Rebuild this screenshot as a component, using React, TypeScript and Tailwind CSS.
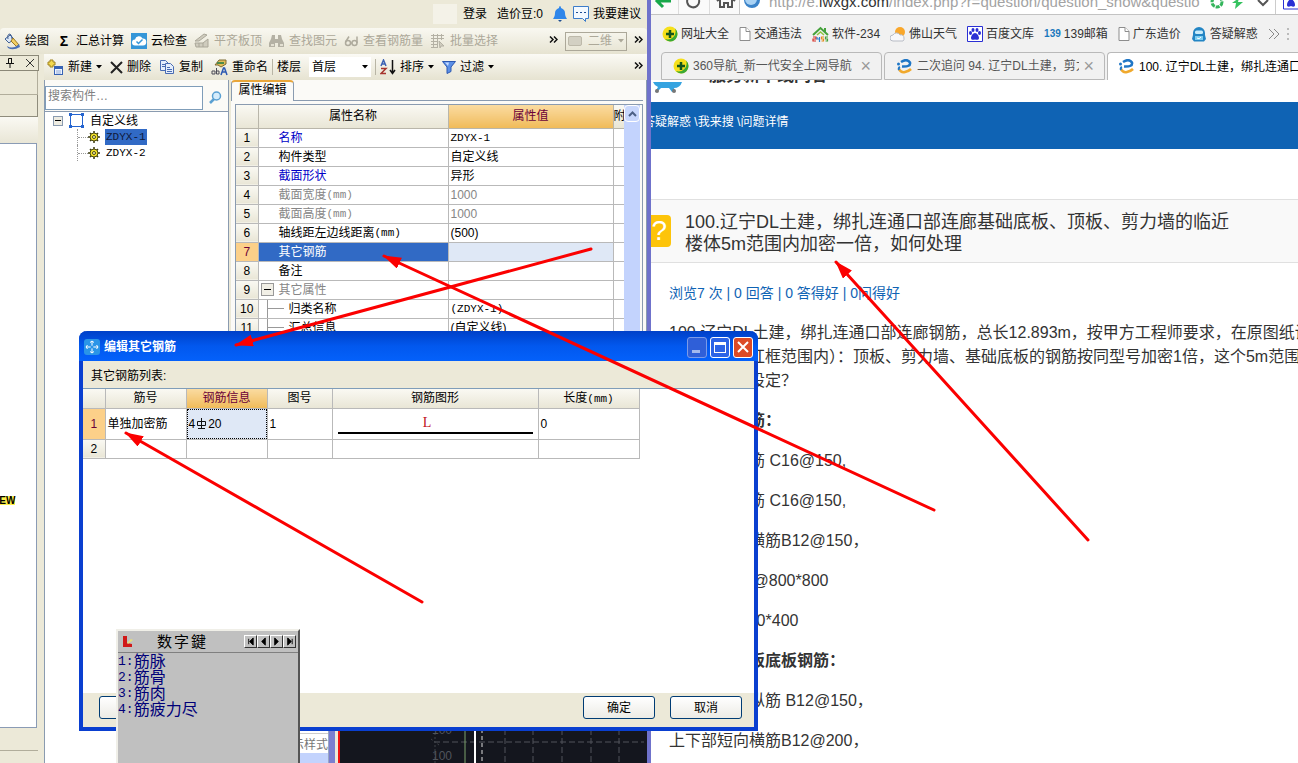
import React from 'react'
import clsx from 'clsx'

interface IconProps {
  className?: string
}
interface PropertyRow {
  name: string
  unit?: string
  value: string
  mono?: boolean
  tone?: 'blue' | 'gray'
  selected?: boolean
  group?: boolean
  child?: boolean
}

const uiFont = "font-['Liberation_Sans','Noto_Sans_CJK_SC',sans-serif]"
const monoFont = "font-['Liberation_Mono','Noto_Sans_CJK_SC',monospace] text-[11px]"
const headFill = 'bg-linear-to-b from-[#faf9f3] to-[#e9e6d6]'
const hotFill = 'bg-linear-to-b from-[#fadba0] to-[#f0bb58]'

const properties: PropertyRow[] = [
  { name: '名称', value: 'ZDYX-1', mono: true, tone: 'blue' },
  { name: '构件类型', value: '自定义线' },
  { name: '截面形状', value: '异形', tone: 'blue' },
  { name: '截面宽度', unit: '(mm)', value: '1000', tone: 'gray' },
  { name: '截面高度', unit: '(mm)', value: '1000', tone: 'gray' },
  { name: '轴线距左边线距离', unit: '(mm)', value: '(500)' },
  { name: '其它钢筋', value: '', selected: true },
  { name: '备注', value: '' },
  { name: '其它属性', value: '', tone: 'gray', group: true },
  { name: '归类名称', value: '(ZDYX-1)', mono: true, child: true },
  { name: '汇总信息', value: '(自定义线)', child: true },
]

const answers: { text: string; bold?: boolean }[] = [
  { text: '一、顶板钢筋：', bold: true },
  { text: '上部长向纵筋 C16@150,' },
  { text: '下部长向纵筋 C16@150,' },
  { text: '上下部短向横筋B12@150，' },
  { text: '拉结钢筋A6@800*800' },
  { text: '暗梁 b*h=400*400' },
  { text: '二、通廊筏板底板钢筋：', bold: true },
  { text: '上下部长向纵筋 B12@150，' },
  { text: '上下部短向横筋B12@200，' },
]

const arrows = [
  [591, 249, 236, 345],
  [934, 510, 384, 256],
  [1088, 540, 836, 262],
  [422, 602, 126, 433],
]

function BucketIcon(): React.JSX.Element {
  return (
    <svg width="17" height="17" viewBox="0 0 17 17">
      <path d="M1 6 L6 2 L10 6 L5 10 Z" fill="#dbe6f5" stroke="#3f5f93" />
      <path d="M4 6 Q3 1 6 1 Q8 2 8 6" fill="none" stroke="#3f5f93" />
      <path d="M9 5 L15 12 L13 14 L7 8 Z" fill="#f2cf63" stroke="#9a7620" />
      <path d="M3 13 Q9 17 15 11 L16 14 Q9 18 4 15Z" fill="#4a6fb4" />
    </svg>
  )
}
function CloudIcon(): React.JSX.Element {
  return (
    <svg width="16" height="16" viewBox="0 0 16 16">
      <rect width="16" height="16" fill="#3596d8" />
      <path d="M4 12.500a3 3 0 0 1 0-6 4 4 0 0 1 7.500-1A3.500 3.500 0 0 1 12 12.500Z" fill="#fff" />
      <path d="m5.500 8.500 2 2 4-4" fill="none" stroke="#3596d8" strokeWidth="1.500" />
    </svg>
  )
}
function SlabIcon(): React.JSX.Element {
  return (
    <svg width="16" height="16" viewBox="0 0 16 16" fill="#cfccbe" stroke="#aaa799">
      <path d="M1 8 L10 1 L13 2 L5 8 Z" />
      <path d="M1 10 H9 L14 6 V14 H2Z" />
      <path d="M5 10V14M9 10V14" />
    </svg>
  )
}
function BinocularsIcon(): React.JSX.Element {
  return (
    <svg width="16" height="16" viewBox="0 0 16 16" fill="#b4b1a4">
      <path d="M3 2h3v4h3V2h3l1 4 2 4v4H9v-4H6v4H0v-4l2-4Z" />
      <path d="M2 11h3v2H2zM11 11h3v2h-3z" fill="#e3e0d2" />
    </svg>
  )
}
function GlassesIcon(): React.JSX.Element {
  return (
    <svg width="15" height="12" viewBox="0 0 15 12" fill="none" stroke="#aeab9d" strokeWidth="1.500">
      <circle cx="4" cy="8" r="2.500" />
      <circle cx="10.500" cy="8" r="2.500" />
      <path d="M1.500 7 5 1.500M13 8V1.500M6 8h2" />
    </svg>
  )
}
function BatchIcon(): React.JSX.Element {
  return (
    <svg width="16" height="16" viewBox="0 0 16 16" fill="none" stroke="#b4b1a4">
      <path d="M1 2.500h13M1 5.500h13M1 8.500h7M1 11.500h7M1 14.500h7M3.500 1v14M7.500 1v14M11.500 1v6" />
      <path d="m9 8 5 5h-3l-1 2Z" fill="#d0cdbf" />
    </svg>
  )
}
function NewIcon(): React.JSX.Element {
  return (
    <svg width="17" height="17" viewBox="0 0 17 17">
      <path d="M3 1h3v2h2v3H6v2H3V6H1V3h2Z" fill="#f4d94e" stroke="#a08320" />
      <rect x="7.500" y="7.500" width="8" height="8" fill="#eef4ff" stroke="#3763b5" />
      <path d="M7 9h9" stroke="#3763b5" strokeWidth="2" />
      <path d="M9 12h5M9 14h5" stroke="#8fa9d8" />
    </svg>
  )
}
function CopyIcon(): React.JSX.Element {
  return (
    <svg width="16" height="16" viewBox="0 0 16 16" fill="#e5eefc" stroke="#4a6cb3">
      <path d="M1.500 1.500h5l3 3v7h-8Z" />
      <path d="M6.500 4.500h5l3 3v7h-8Z" />
      <path d="M8 8.500h3M8 10.500h5M8 12.500h5M3 5.500h3M3 7.500h3" />
    </svg>
  )
}
function RenameIcon(): React.JSX.Element {
  return (
    <svg width="17" height="17" viewBox="0 0 17 17">
      <path d="M4 6 8 1h7v4l-5 3-3-2Z" fill="#e2bd57" stroke="#7c6a35" />
      <path d="M6 4h7" stroke="#4e8a4b" strokeWidth="2" />
      <path d="M1 15v-3h3v3H1m4.500-6v6H8v-3H5" fill="none" stroke="#4b4b57" />
      <path d="m10 16 2.500-7h1l2.500 7M11 13h4" fill="none" stroke="#2d59b2" strokeWidth="1.500" />
    </svg>
  )
}
function SortIcon(): React.JSX.Element {
  return (
    <svg width="16" height="16" viewBox="0 0 16 16" fill="none" strokeWidth="1.500">
      <path d="m1 7 2.500-6L6 7M2 5h3" stroke="#3c62b4" />
      <path d="M1 9.500h5l-5 5h5" stroke="#a6342e" />
      <path d="M12.500 1v13M10 11l2.500 3.500L15 11" stroke="#111" />
    </svg>
  )
}
function FunnelIcon(): React.JSX.Element {
  return (
    <svg width="14" height="13" viewBox="0 0 14 13">
      <path d="M.5.5h13L9 6v4.500L5 12.500V6Z" fill="#5b8fe6" stroke="#2c58b0" />
      <path d="M3 1.500h4L6 5Z" fill="#c6dcff" />
    </svg>
  )
}
function BellIcon(): React.JSX.Element {
  return (
    <svg width="14" height="16" viewBox="0 0 14 16" fill="#2f86ea">
      <path d="M7 0a2 2 0 0 1 1 2c3 1 4 3 4 5 0 3 1 4 2 6H0C1 11 2 10 2 7c0-2 1-4 4-5a2 2 0 0 1 1-2Z" />
      <path d="M5 14h4l-2 2Z" fill="#1d4e92" />
    </svg>
  )
}
function SpeechIcon(): React.JSX.Element {
  return (
    <svg width="16" height="16" viewBox="0 0 16 16" fill="#f3f9ff" stroke="#3c7cc9">
      <path d="M.5 .5h15v12h-3v3l-3-3h-9Z" />
      <path d="M3 6.500h2M7 6.500h2M11 6.500h2" stroke="#1c4c94" />
    </svg>
  )
}
function GearIcon(): React.JSX.Element {
  return (
    <svg width="12" height="12" viewBox="0 0 12 12">
      <path d="M6 0v12M0 6h12M2 2l8 8M10 2l-8 8" stroke="#3a3a12" strokeWidth="1.500" />
      <circle cx="6" cy="6" r="4" fill="#f3e227" stroke="#4d4a10" />
      <circle cx="6" cy="6" r="1.500" fill="#fffcc0" stroke="#4d4a10" />
    </svg>
  )
}
function SquareIcon(): React.JSX.Element {
  return (
    <svg width="15" height="15" viewBox="0 0 15 15" fill="#2464d0">
      <path d="M1.500 1.500h12v12h-12Z" fill="none" stroke="#2464d0" />
      <path d="M0 0h3v3H0zM12 0h3v3h-3zM0 12h3v3H0zM12 12h3v3h-3z" />
    </svg>
  )
}
function PlusBallIcon(): React.JSX.Element {
  return (
    <svg width="16" height="16" viewBox="0 0 16 16">
      <circle cx="8" cy="8" r="7.500" fill="#f6e01b" />
      <path d="M3 13A8 8 0 0 0 13 2.500 7.500 7.500 0 0 1 8 15.500 8 8 0 0 1 3 13Z" fill="#3aa935" />
      <path d="M8 4v8M4 8h8" stroke="#14551c" strokeWidth="2.500" />
    </svg>
  )
}
function PageIcon(): React.JSX.Element {
  return (
    <svg width="12" height="14" viewBox="0 0 12 14" fill="#fff" stroke="#8d8d8d">
      <path d="M1 .5h6l4 4v9H1Z" />
      <path d="M7 .5v4h4" />
    </svg>
  )
}
function HouseIcon(): React.JSX.Element {
  return (
    <svg width="17" height="16" viewBox="0 0 17 16" fill="none" strokeWidth="2">
      <path d="m1 9 7.500-7L16 9M13 2v4" stroke="#45a23b" />
      <path d="M5 9l3.500-3L12 9" stroke="#8cc63f" strokeWidth="1.500" />
      <path d="M1 11h3v2H1v2h3" stroke="#d8322a" strokeWidth="1.200" />
      <path d="M5 11v2h3M7.500 11v5" stroke="#2b7fd0" strokeWidth="1.200" />
      <path d="M12 11H9.500v2h2v2h-2" stroke="#e68a1d" strokeWidth="1.200" />
      <path d="M16 11h-2.500v2h2v2h-2" stroke="#45a23b" strokeWidth="1.200" />
    </svg>
  )
}
function WeatherIcon(): React.JSX.Element {
  return (
    <svg width="16" height="16" viewBox="0 0 16 16">
      <circle cx="10" cy="6" r="5" fill="#f9a72b" />
      <path d="M3 15a3 3 0 0 1 0-6 4 4 0 0 1 7 0 3 3 0 0 1 4 3 3 3 0 0 1-1 3Z" fill="#f7f7fa" stroke="#b9bdc6" />
    </svg>
  )
}
function PawIcon(): React.JSX.Element {
  return (
    <svg width="16" height="16" viewBox="0 0 16 16" fill="#2a2fd4">
      <path d="M.5.5h15v15H.5Z" fill="#fff" stroke="#2a2fd4" />
      <ellipse cx="3.500" cy="7" rx="1.500" ry="2" />
      <ellipse cx="6" cy="4" rx="1.500" ry="2" />
      <ellipse cx="10" cy="4" rx="1.500" ry="2" />
      <ellipse cx="12.500" cy="7" rx="1.500" ry="2" />
      <path d="M8 7c2 0 4 3 4 5s-2 2-4 1.500C6 14 4 14 4 12s2-5 4-5Z" />
    </svg>
  )
}
function RobotIcon(): React.JSX.Element {
  return (
    <svg width="16" height="16" viewBox="0 0 16 16">
      <path d="M2 7a6 6 0 0 1 12 0v2l1 4-2 2.500H3L1 13l1-4Z" fill="#2385c4" />
      <rect x="4" y="4.500" width="8" height="3.500" rx="1.500" fill="#c8ecfb" />
      <path d="M4 10h8v4H4Z" fill="#7ccdf0" />
      <path d="M6 12q2 2 4-1" stroke="#fff" fill="none" />
    </svg>
  )
}
function SwirlIcon(): React.JSX.Element {
  return (
    <svg width="17" height="15" viewBox="0 0 17 15" fill="none">
      <path d="M5 3Q11-1 14 3.500 15 8 6 7.500" stroke="#1f76c6" strokeWidth="2.500" />
      <path d="M3 10Q5 14 9 13 13 12 15 10" stroke="#f0a92d" strokeWidth="2.500" />
      <path d="M4 8Q2 9 3 11" stroke="#1f76c6" strokeWidth="2" />
      <circle cx="2.500" cy="5" r="1.500" fill="#1f76c6" />
    </svg>
  )
}
function Caret({ className }: IconProps): React.JSX.Element {
  return (
    <svg width="6" height="4" viewBox="0 0 6 4" className={className}>
      <path d="M0 0h6L3 3.500Z" fill="currentColor" />
    </svg>
  )
}
function More(): React.JSX.Element {
  return (
    <button aria-label="more" className="shrink-0 self-start pt-2">
      <svg width="9" height="7" viewBox="0 0 9 7" fill="none" stroke="#111" strokeWidth="1.500">
        <path d="m1 .5 3 3-3 3M5 .5l3 3-3 3" />
      </svg>
    </button>
  )
}

interface ToolProps {
  icon: React.ReactNode
  label: string
  disabled?: boolean
  caret?: boolean
}
function Tool({ icon, label, disabled, caret }: ToolProps): React.JSX.Element {
  return (
    <button
      disabled={disabled}
      className={clsx('flex shrink-0 items-center gap-1', disabled && 'text-[#aca899]')}>
      {icon}
      <span>{label}</span>
      {caret && <Caret />}
    </button>
  )
}

function SidePanel(): React.JSX.Element {
  return (
    <aside className="flex w-[44px] shrink-0 flex-col">
      <div className="mt-px flex h-4 w-[39px] items-center justify-end gap-3 border border-l-0 border-[#8b8878] pr-1">
        <svg width="8" height="10" viewBox="0 0 8 10" fill="none" stroke="#111">
          <path d="M2.500 5.500v-5h3v5M5.500 0v6M0 5.500h8M4 6v4" />
        </svg>
        <button aria-label="close">
          <svg width="8" height="8" viewBox="0 0 8 8" stroke="#333">
            <path d="m0 0 8 8M8 0 0 8" />
          </svg>
        </button>
      </div>
      <div className="h-6 w-[38px] border-r border-b border-[#b1ad9b]" />
      <div className="h-[22px] w-[38px] border-r border-b border-[#8f8c7c]" />
      <div className={`h-[26px] w-[38px] ${headFill}`} />
      <div className="flex w-[37px] flex-1 items-center border-t border-r border-b border-[#8a9bb5] bg-white">
        <span className="-ml-2 mt-[130px] bg-[#fff04a] text-[10px] leading-[9px] font-bold">
          NEW
        </span>
      </div>
      <div className="h-[23px] w-[38px] border-b border-[#b1ad9b]" />
      <div className="h-3 w-[38px]" />
    </aside>
  )
}

function TreePanel(): React.JSX.Element {
  return (
    <section className="flex w-[185px] shrink-0 flex-col border-r border-l border-[#8a9bb0] bg-white">
      <div className="flex h-8 items-center border-b border-[#8a9bb0] bg-[#fbfaf6] pt-1">
        <input
          aria-label="搜索构件"
          placeholder="搜索构件…"
          className="h-6 w-[158px] border border-[#7f9db9] bg-white px-[2px] pb-1 placeholder:text-[#808080]"
        />
        <button aria-label="搜索" className="flex flex-1 justify-center">
          <svg width="13" height="13" viewBox="0 0 13 13" fill="#d5ecfb" stroke="#5aa0d2" strokeWidth="1.500">
            <circle cx="7.500" cy="5" r="4" />
            <path d="M5 8 1 12" strokeWidth="2.500" />
          </svg>
        </button>
      </div>
      <ul className="pl-2 leading-4">
        <li className="flex items-center gap-[6px]">
          <span className="flex h-[10px] w-[10px] items-center justify-center border border-[#8a9bb0] bg-[#eeece2]">
            <span className="h-px w-[6px] bg-black" />
          </span>
          <SquareIcon />
          <span className="pt-px">自定义线</span>
        </li>
        {['ZDYX-1', 'ZDYX-2'].map((name, i) => (
          <li key={name} className="ml-6 flex h-4 items-center border-l border-dotted border-[#999]">
            <span className="w-[10px] border-t border-dotted border-[#999]" />
            <GearIcon />
            <span className={clsx('ml-[5px] px-px', monoFont, i === 0 && 'bg-[#316ac5] text-[#10193a]')}>
              {name}
            </span>
          </li>
        ))}
      </ul>
    </section>
  )
}

function PropertyTable(): React.JSX.Element {
  return (
    <table className="w-full table-fixed border-collapse bg-white">
      <colgroup>
        <col className="w-[22px]" />
        <col />
        <col className="w-[165px]" />
        <col className="w-[11px]" />
      </colgroup>
      <thead>
        <tr className={`h-[23px] ${headFill}`}>
          <th className="border-r border-b border-[#b9b6aa]" />
          <th className="border-r border-b border-[#b9b6aa] font-normal">属性名称</th>
          <th className={`border-r border-b border-[#b9b6aa] font-normal text-[#6b0038] ${hotFill}`}>
            属性值
          </th>
          <th className="overflow-hidden border-b border-[#b9b6aa] text-left font-normal whitespace-nowrap">
            附加
          </th>
        </tr>
      </thead>
      <tbody>
        {properties.map((row, i) => (
          <tr key={row.name} className="h-[19px] leading-[18px]">
            <td
              className={clsx(
                'border-r border-b border-[#b9b9b9] p-0 text-center',
                row.selected ? 'bg-[#fcd089] text-[#6b0038]' : headFill,
              )}>
              {i + 1}
            </td>
            <td
              className={clsx(
                'border-r border-b border-[#b9b9b9] p-0',
                row.tone === 'blue' && 'text-[#0000c8]',
                row.tone === 'gray' && 'text-[#868686]',
                row.selected && 'bg-[#316ac5] text-white',
              )}>
              <div className={clsx('flex items-center', !row.group && !row.child && 'pl-5')}>
                {row.group && (
                  <span className="mr-[5px] ml-[2px] flex h-[13px] w-[13px] items-center justify-center border border-[#999] bg-[#f1efe6]">
                    <span className="h-px w-[7px] bg-black" />
                  </span>
                )}
                {row.child && (
                  <span className="mr-[5px] ml-2 flex h-[18px] w-[17px] items-center border-l border-[#999]">
                    <span className="w-full border-t border-[#999]" />
                  </span>
                )}
                {row.name}
                {row.unit && <span className={monoFont}>{row.unit}</span>}
              </div>
            </td>
            <td
              className={clsx(
                'border-r border-b border-[#b9b9b9] p-0 pl-[2px]',
                row.tone === 'gray' && 'text-[#868686]',
                row.mono && monoFont,
                row.selected && 'bg-[#dfe8f6]',
              )}>
              {row.value}
            </td>
            <td className="border-b border-[#b9b9b9] p-0" />
          </tr>
        ))}
      </tbody>
    </table>
  )
}

function DrawingStrip(): React.JSX.Element {
  return (
    <div className="flex h-[34px] shrink-0 overflow-hidden">
      <div className="flex w-[98px] flex-col items-end border-r border-[#9aa8c4] bg-white leading-[16px] text-[#777]">
        <span className="-mt-3 border-b border-[#ccc] text-black">线框类型</span>
        <span className="pt-[3px]">显示样式</span>
        <span className="h-3 w-full bg-[#c3d3fd]" />
      </div>
      <div className="w-[6px] bg-[#7b7fd0]" />
      <div className="w-[3px] bg-[#ece9d8]" />
      <div className="w-[2px] bg-[#f01010]" />
      <div className="flex-1 overflow-hidden bg-[#14161e]">
        <svg width="100%" height="34" fill="none">
          <path d="M94 13h210M165 0v34M193 0v34M222 0v34M251 0v34M279 0v34" stroke="#50535a" strokeDasharray="6 3" />
          <path d="M95 0v34M91 10l8 6" stroke="#3f4248" strokeDasharray="2 2" />
          <path d="M125 0v34" stroke="#7da36c" />
          <path d="M135 0v34" stroke="#fff" strokeWidth="2" />
          <path d="M142 0v34" stroke="#ddd" strokeDasharray="4 3" />
          <text x="92" y="5" fontSize="12" fill="#50545c">100</text>
          <text x="92" y="31" fontSize="12" fill="#50545c">100</text>
        </svg>
      </div>
    </div>
  )
}

function Workbench(): React.JSX.Element {
  return (
    <div className="flex w-[calc(50%+2px)] shrink-0 flex-col overflow-hidden border-r-4 border-[#6f72cb] bg-[#ece9d8] whitespace-nowrap">
      <div className="flex h-7 shrink-0 items-center justify-end gap-[10px] pr-[6px]">
        <span className="-mr-1 h-5 w-6 bg-[#f4f2e8]" />
        <button>登录</button>
        <span>造价豆:0</span>
        <BellIcon />
        <button className="-ml-1 flex items-center gap-1">
          <SpeechIcon />
          我要建议
        </button>
      </div>
      <div className="flex h-[26px] shrink-0 items-center gap-[7px] rounded-sm bg-linear-to-b from-[#f9f8f1] to-[#e6e3d1] pr-1 pl-1">
        <Tool icon={<BucketIcon />} label="绘图" />
        <Tool icon={<b className="w-4 text-center text-sm">Σ</b>} label="汇总计算" />
        <Tool icon={<CloudIcon />} label="云检查" />
        <Tool disabled icon={<SlabIcon />} label="平齐板顶" />
        <Tool disabled icon={<BinocularsIcon />} label="查找图元" />
        <Tool disabled icon={<GlassesIcon />} label="查看钢筋量" />
        <Tool disabled icon={<BatchIcon />} label="批量选择" />
        <span className="flex-1" />
        <More />
        <button
          disabled
          className="flex h-[19px] w-[62px] shrink-0 items-center justify-between border border-[#aca899] px-[2px] text-[#aca899]">
          <span className="h-[10px] w-[14px] rounded-[2px] border border-[#bdb9aa] bg-[#d3d0c3]" />
          二维
          <Caret />
        </button>
        <More />
      </div>
      <div className="flex min-h-0 flex-1">
        <SidePanel />
        <div className="flex min-w-0 flex-1 flex-col">
          <div className="flex h-[26px] shrink-0 items-center gap-2 bg-linear-to-b from-[#fbfaf5] to-[#e6e3d1] pr-1 pl-[3px]">
            <Tool caret icon={<NewIcon />} label="新建" />
            <Tool
              icon={
                <svg width="13" height="13" viewBox="0 0 13 13" stroke="#222" strokeWidth="2">
                  <path d="m1 1 11 11M12 1 1 12" />
                </svg>
              }
              label="删除"
            />
            <Tool icon={<CopyIcon />} label="复制" />
            <Tool icon={<RenameIcon />} label="重命名" />
            <span className="-mx-1 h-4 w-px bg-[#b8b5a5]" />
            <span>楼层</span>
            <button className="flex h-5 w-[62px] items-center justify-between bg-white px-[3px]">
              首层
              <Caret />
            </button>
            <span className="-mx-1 h-4 w-px bg-[#b8b5a5]" />
            <Tool caret icon={<SortIcon />} label="排序" />
            <Tool caret icon={<FunnelIcon />} label="过滤" />
            <span className="flex-1" />
            <More />
          </div>
          <div className="flex min-h-0 flex-1 gap-[2px]">
            <TreePanel />
            <div className="flex min-w-0 flex-1 flex-col">
              <section className="min-h-0 flex-1 overflow-hidden border-r border-[#8a9bb0] bg-[#fbfaf7] pr-[3px]">
                <div className="flex h-[21px]">
                  <div className="w-[63px] rounded-t-sm border-t-2 border-r border-l border-t-[#e9a63a] border-r-[#8a9bb0] border-l-[#8a9bb0] text-center leading-[17px]">
                    属性编辑
                  </div>
                  <div className="flex-1 border-b border-[#8a9bb0]" />
                </div>
                <div className="mt-[3px] ml-1 flex border-t border-r border-l border-[#8a9bb0] pr-[2px]">
                  <div className="min-w-0 flex-1">
                    <PropertyTable />
                  </div>
                  <div className="w-4 bg-[#c3d3fd]">
                    <button
                      aria-label="scroll up"
                      className="flex h-[17px] w-4 items-center justify-center rounded-sm border border-white bg-[#c8d7fc]">
                      <svg width="9" height="6" viewBox="0 0 9 6" fill="none" stroke="#4d6185" strokeWidth="2">
                        <path d="m1 5 3.500-3.500L8 5" />
                      </svg>
                    </button>
                  </div>
                </div>
              </section>
              <DrawingStrip />
            </div>
          </div>
        </div>
      </div>
    </div>
  )
}

function Browser(): React.JSX.Element {
  return (
    <div className="min-w-0 flex-1 overflow-hidden bg-white whitespace-nowrap text-[#333]">
      <div className="flex h-[15px] items-end overflow-hidden border-b border-[#c3c3c3] bg-[#fafafa]">
        <svg width="88" height="14" viewBox="0 0 88 14" fill="none" strokeWidth="2" className="shrink-0">
          <path d="M12-5 6 1l6 6M6 1h14" stroke="#18a84a" strokeWidth="3" />
          <path d="M38-3a6 6 0 1 0 10 3" stroke="#555" />
          <path d="M69 0v7h4V3h4v4h4V0M66 1l9-7 9 7" stroke="#555" />
          <path d="M27.500 0v14M58.500 0v14" stroke="#ddd" strokeWidth="1" />
        </svg>
        <div className="flex h-[14px] flex-1 items-end gap-2 border-l border-[#c9c9c9] bg-white pl-1">
          <svg width="17" height="14" viewBox="0 0 17 14" className="shrink-0">
            <circle cx="8" cy="0" r="8" fill="#3b83c9" />
            <circle cx="7" cy="-1" r="6" fill="#a9d2f4" />
          </svg>
          <div className="h-[14px] flex-1 text-[15px] text-[#a3a3a3]">
            <span className="-mt-2 block leading-5">
              http://e.<span className="text-[#333]">lwxgx.com</span>/index.php?r=question/question_show&amp;questio
            </span>
          </div>
          <svg width="36" height="14" viewBox="0 0 36 14" className="shrink-0">
            <circle cx="9" cy="2" r="5" fill="none" stroke="#35b55c" strokeWidth="3" strokeDasharray="4 1" />
            <path d="m31-2-7 5h4l-1 6 8-7h-5Z" fill="#35c25f" />
          </svg>
          <svg width="48" height="14" viewBox="0 0 48 14" fill="none" className="shrink-0">
            <path d="m6 0 5 5 5-5" stroke="#555" strokeWidth="2" />
            <path d="M23.500 0v14" stroke="#ccc" />
            <path d="M31.500-5h15v14h-15Z" fill="#fff" stroke="#2a2fd4" />
            <path d="M39-1c3 1 4 4 4 6s-2 2-4 1c-2 1-4 1-4-1s1-5 4-6Z" fill="#2a2fd4" />
          </svg>
        </div>
      </div>
      <nav className="flex h-[37px] items-center gap-[10px] bg-[#f1f1f1] pl-[11px]">
        {[
          { icon: <PlusBallIcon />, label: '网址大全' },
          { icon: <PageIcon />, label: '交通违法' },
          { icon: <HouseIcon />, label: '软件-234' },
          { icon: <WeatherIcon />, label: '佛山天气' },
          { icon: <PawIcon />, label: '百度文库' },
          { icon: <b className="text-[10px] text-[#1a78bd]">139</b>, label: '139邮箱' },
          { icon: <PageIcon />, label: '广东造价' },
          { icon: <RobotIcon />, label: '答疑解惑' },
        ].map(({ icon, label }) => (
          <a key={label} href="#" className="flex shrink-0 items-center gap-[3px]">
            {icon}
            {label}
          </a>
        ))}
        <svg width="30" height="12" viewBox="0 0 30 12" fill="none" stroke="#888" className="shrink-0">
          <path d="m1 1 5 5-5 5M6 1l5 5-5 5" />
          <path d="M20 0v12" stroke="#bbb" strokeWidth="2" strokeDasharray="2 3" />
        </svg>
      </nav>
      <div className="flex h-7 gap-[2px] bg-[#f1f1f1] pl-[10px]">
        <div className="flex w-[221px] shrink-0 items-center gap-1 rounded-t border border-[#b9b9b9] pr-[10px] pl-[11px] text-[#555]">
          <PlusBallIcon />
          <span className="flex-1">360导航_新一代安全上网导航</span>
          <button aria-label="close tab" className="text-lg leading-4 text-[#999]">×</button>
        </div>
        <div className="flex w-[221px] shrink-0 items-center gap-1 rounded-t border border-[#b9b9b9] pr-[10px] pl-[11px] text-[#555]">
          <SwirlIcon />
          <span className="min-w-0 flex-1 overflow-hidden">二次追问 94. 辽宁DL土建，剪力</span>
          <button aria-label="close tab" className="text-lg leading-4 text-[#999]">×</button>
        </div>
        <div className="flex flex-1 items-center gap-1 overflow-hidden rounded-tl border border-r-0 border-b-0 border-[#b9b9b9] bg-white pl-[10px] text-black">
          <span className="shrink-0">
            <SwirlIcon />
          </span>
          100. 辽宁DL土建，绑扎连通口部连廊
        </div>
      </div>
      <div className="flex h-[22px] gap-6 overflow-hidden">
        <svg width="34" height="22" viewBox="0 0 34 22" className="shrink-0">
          <path d="M2 2h29q-2 6-8 6l1 4h-3l-3-4h-8l-4 4H4l3-5Q3 5 2 2Z" fill="#35a3e0" />
          <circle cx="6" cy="11" r="2" fill="#777" />
          <circle cx="23" cy="11" r="2" fill="#777" />
        </svg>
        <span className="-mt-3 text-[17px] leading-4 font-bold text-[#333]">服务新干线问答</span>
      </div>
      <div className="h-[47px] bg-[#0f63b4] text-white">
        <div className="-ml-2 leading-[40px]">
          <a href="#">答疑解惑</a> \<a href="#">我来搜</a> \<a href="#">问题详情</a>
        </div>
      </div>
      <div className="mt-[50px] flex h-16 items-center gap-[14px] border-y border-[#e0e0e0] bg-[#f9f9f9] text-lg leading-[22px]">
        <span className="flex h-8 w-5 shrink-0 items-center justify-end rounded-r-sm bg-[#fdc40a] pr-1 text-[28px] text-white">
          ?
        </span>
        <h1 className="pt-1">
          100.辽宁DL土建，绑扎连通口部连廊基础底板、顶板、剪力墙的临近
          <br />
          楼体5m范围内加密一倍，如何处理
        </h1>
      </div>
      <article className="flex flex-col gap-4 pt-[18px] pl-[18px] text-base leading-6">
        <p className="text-sm leading-6 text-[#0f63b4]">浏览7 次 | 0 回答 | 0 答得好 | 0问得好</p>
        <p>
          100.辽宁DL土建，绑扎连通口部连廊钢筋，总长12.893m，按甲方工程师要求，在原图纸设
          <br />
          计基础上（红框范围内）：顶板、剪力墙、基础底板的钢筋按同型号加密1倍，这个5m范围
          <br />
          围内该如何设定？
        </p>
        {answers.map(({ text, bold }) => (
          <p key={text} className={clsx(bold && 'font-bold')}>
            {text}
          </p>
        ))}
      </article>
    </div>
  )
}

function RebarDialog(): React.JSX.Element {
  const cell = 'border-r border-b border-[#b9b9b9] p-0'
  const button =
    'h-[23px] w-[72px] rounded-[3px] border border-[#003c74] bg-linear-to-b from-white to-[#ecebe5]'
  return (
    <section
      role="dialog"
      aria-label="编辑其它钢筋"
      className="absolute top-[331px] left-[79px] flex h-[400px] w-[679px] flex-col rounded-t-lg border-x-4 border-b-4 border-[#0a3fd0] bg-[#ece9d8]">
      <header className="-mx-1 flex h-[30px] shrink-0 items-center gap-[3px] rounded-t-lg bg-linear-to-b from-[#0040c8] via-[#0258ee] to-[#0461fb] px-[5px] pt-[2px] text-white">
        <svg width="16" height="16" viewBox="0 0 16 16">
          <rect width="16" height="16" rx="3" fill="#2a95e8" />
          <path d="M8 2v12M2 8h12M6 3.500 8 2l2 1.500M6 12.500 8 14l2-1.500M3.500 6 2 8l1.500 2M12.500 6 14 8l-1.500 2" fill="none" stroke="#fff" />
          <circle cx="8" cy="8" r="1.500" fill="#2a95e8" />
        </svg>
        <h2 className="flex-1 pl-px font-bold">编辑其它钢筋</h2>
        <button aria-label="minimize" className="flex h-[21px] w-5 items-end justify-start rounded-[3px] border border-[#7c9be8] bg-[#2f5fd8] p-1">
          <span className="h-[3px] w-2 bg-[#a3b9ee]" />
        </button>
        <button aria-label="maximize" className="flex h-[21px] w-5 items-center justify-center rounded-[3px] border border-white bg-[#2c63e6]">
          <span className="h-[11px] w-3 border border-t-[3px] border-white" />
        </button>
        <button aria-label="close" className="flex h-[21px] w-5 items-center justify-center rounded-[3px] border border-white bg-[#dc4a27]">
          <svg width="12" height="12" viewBox="0 0 12 12" stroke="#fff" strokeWidth="2">
            <path d="m1 1 10 10M11 1 1 11" />
          </svg>
        </button>
      </header>
      <p className="h-[27px] shrink-0 pl-2 leading-[30px]">其它钢筋列表:</p>
      <div className="min-h-0 flex-1 border-t border-[#7f9db9] bg-white">
        <table className="w-[556px] table-fixed border-collapse">
          <colgroup>
            <col className="w-[22px]" />
            <col className="w-[81px]" />
            <col className="w-[81px]" />
            <col className="w-[65px]" />
            <col className="w-[206px]" />
            <col className="w-[101px]" />
          </colgroup>
          <thead>
            <tr className={`h-[19px] ${headFill}`}>
              <th className={cell} />
              <th className={`${cell} font-normal`}>筋号</th>
              <th className={`${cell} font-normal text-[#6b0038] ${hotFill}`}>钢筋信息</th>
              <th className={`${cell} font-normal`}>图号</th>
              <th className={`${cell} font-normal`}>钢筋图形</th>
              <th className={`${cell} font-normal`}>
                长度<span className={monoFont}>(mm)</span>
              </th>
            </tr>
          </thead>
          <tbody>
            <tr className="h-[31px]">
              <td className={`${cell} bg-[#fcd089] text-center text-[#6b0038]`}>1</td>
              <td className={`${cell} pl-[2px]`}>单独加密筋</td>
              <td className={`${cell} bg-[#dfe8f6]`}>
                <div className="flex h-[30px] items-center gap-px border border-dotted border-black pl-px">
                  4
                  <svg width="11" height="11" viewBox="0 0 11 11" fill="none" stroke="#111">
                    <path d="M5.500 0v10M1.500 3.500h8v4h-8ZM2 10.500h7" />
                  </svg>
                  20
                </div>
              </td>
              <td className={`${cell} pl-[2px]`}>1</td>
              <td className={`${cell} px-[5px]`}>
                <div className="border-b-2 border-black pr-4 text-center font-['Liberation_Serif',serif] text-sm leading-[18px] text-[#c01020]">
                  L
                </div>
              </td>
              <td className={`${cell} pl-[2px]`}>0</td>
            </tr>
            <tr className="h-[19px]">
              <td className={`${cell} text-center ${headFill}`}>2</td>
              <td className={cell} />
              <td className={cell} />
              <td className={cell} />
              <td className={cell} />
              <td className={cell} />
            </tr>
          </tbody>
        </table>
      </div>
      <footer className="flex h-[34px] shrink-0 gap-[15px] px-4 pt-[3px] pr-3">
        <button className={button} aria-label="插入" />
        <span className="flex-1" />
        <button className={button}>确定</button>
        <button className={button}>取消</button>
      </footer>
    </section>
  )
}

function CandidateWindow(): React.JSX.Element {
  return (
    <section className="absolute top-[629px] bottom-0 left-[116px] w-[184px] border-2 border-b-0 border-t-[#f0efe8] border-r-[#555] border-l-[#f0efe8] bg-[#c0c0c0]">
      <header className="flex h-[22px] items-center border-b border-[#808080] pr-[2px] pl-1">
        <svg width="11" height="13" viewBox="0 0 11 13">
          <path d="M1 1h4v7l5 1v3H1Z" fill="#d01818" />
          <path d="M5 8 9 4l2 1-5 4Z" fill="#e7dd7a" />
        </svg>
        <h2 className="ml-6 flex flex-1 gap-[2px] text-[15px]">
          <span>数</span>
          <span>字</span>
          <span>鍵</span>
        </h2>
        {['M3 2v6M8 1v8L4 5Z', 'M7 1v8L3 5Z', 'M3 1v8l4-4Z', 'M8 2v6M3 1v8l4-4Z'].map((d) => (
          <button
            key={d}
            aria-label="page"
            className="flex h-[13px] w-[13px] items-center justify-center border border-t-white border-r-[#333] border-b-[#333] border-l-white">
            <svg width="9" height="9" viewBox="0 0 10 10" stroke="#000">
              <path d={d} />
            </svg>
          </button>
        ))}
      </header>
      <ol className="pt-px text-base leading-4 text-[#000078]">
        {['筋脉', '筋骨', '筋肉', '筋疲力尽'].map((word, i) => (
          <li key={word} className="flex h-4 items-center">
            <span className="font-['Liberation_Mono',monospace] text-[13px]">{i + 1}:</span>
            {word}
          </li>
        ))}
      </ol>
    </section>
  )
}

function App(): React.JSX.Element {
  return (
    <main className={`relative flex h-screen w-full overflow-hidden text-xs leading-4 text-black ${uiFont}`}>
      <Workbench />
      <Browser />
      <RebarDialog />
      <CandidateWindow />
      <svg className="pointer-events-none absolute inset-0 h-full w-full">
        <defs>
          <marker
            id="head"
            markerUnits="userSpaceOnUse"
            markerWidth="18"
            markerHeight="12"
            refX="17"
            refY="6"
            orient="auto">
            <path d="M18 6 0 0v12Z" fill="#fb0000" />
          </marker>
        </defs>
        {arrows.map(([x1, y1, x2, y2]) => (
          <line
            key={x1}
            x1={x1}
            y1={y1}
            x2={x2}
            y2={y2}
            stroke="#fb0000"
            strokeWidth="3"
            strokeLinecap="round"
            markerEnd="url(#head)"
          />
        ))}
      </svg>
    </main>
  )
}
export default App
